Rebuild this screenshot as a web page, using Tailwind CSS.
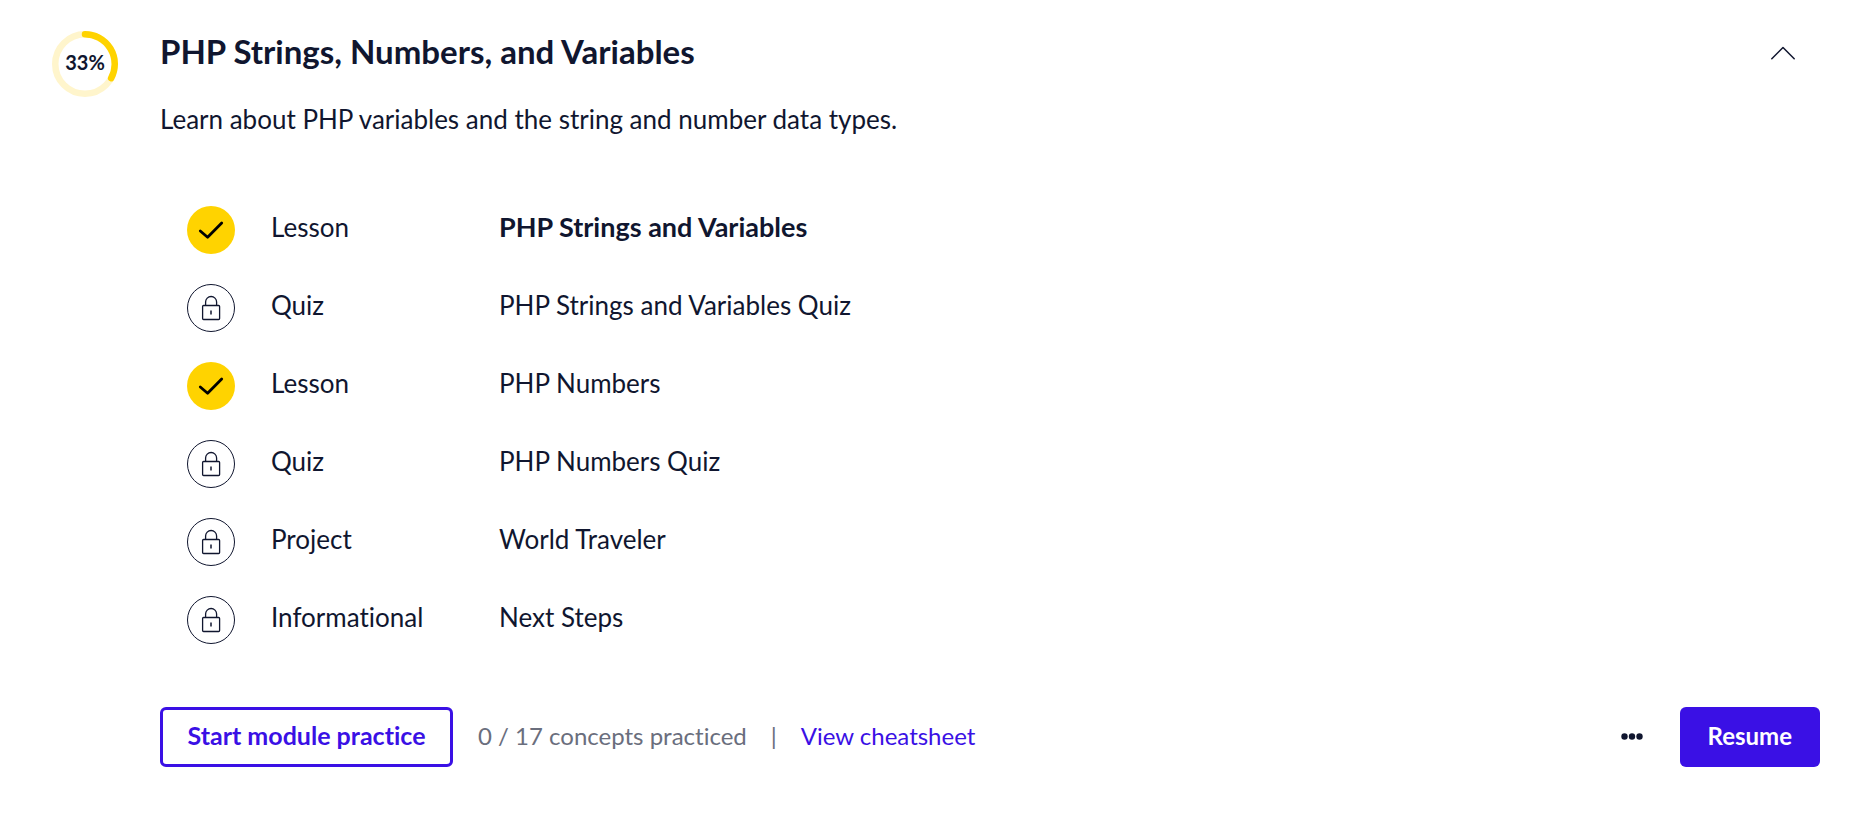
<!DOCTYPE html>
<html lang="en">
<head>
<meta charset="utf-8">
<meta name="viewport" content="width=device-width, initial-scale=1">
<title>PHP Strings, Numbers, and Variables</title>
<script src="https://cdn.jsdelivr.net/npm/@tailwindcss/browser@4"></script>
</head>
<body class="bg-white font-['Lato',sans-serif] text-[26px] leading-9 text-[#10162f] [font-variant-ligatures:none]">
<svg class="hidden">
  <symbol id="check" viewBox="0 0 48 48">
    <circle cx="24" cy="24" r="24" fill="#ffd300"/>
    <path d="M13.3 25 L20.6 31.3 L34.7 17.1" fill="none" stroke="#000" stroke-width="2.8" stroke-linecap="round" stroke-linejoin="round"/>
  </symbol>
  <symbol id="lock" viewBox="0 0 48 48" fill="none" stroke="#10162f">
    <circle cx="24" cy="24" r="23.5"/>
    <rect x="15.6" y="21.5" width="17" height="14" rx="1" stroke-width="1.3"/>
    <path d="M18.6 21.5V18a5.5 5.5 0 0 1 11 0v3.500" stroke-width="1.3"/>
    <path d="M24 26.500v4" stroke-width="1.500"/>
  </symbol>
</svg>
<main class="flex items-start pl-13 pr-11 pt-[31px]">
  <div class="grid size-[66px] shrink-0 place-items-center" role="img" aria-label="33% complete">
    <svg class="col-start-1 row-start-1 size-full" viewBox="0 0 66 66" fill="none" stroke-width="6.500">
      <circle cx="33" cy="33" r="29.750" stroke="#fff5cc"/>
      <path d="M33 3.250A29.750 29.750 0 0 1 59.200 47.100" stroke="#ffd300" stroke-linecap="round"/>
    </svg>
    <span class="col-start-1 row-start-1 pb-1 text-xl font-bold">33%</span>
  </div>
  <section class="ml-[42px] min-w-0 grow">
    <header class="flex items-start justify-between">
      <h1 class="text-[33px] leading-10 font-bold">PHP Strings, Numbers, and Variables</h1>
      <button type="button" aria-label="Collapse module" class="mr-[25px] mt-2.5">
        <svg class="h-6 w-6" viewBox="0 0 24 24" fill="none" stroke="#10162f" stroke-width="1.500" stroke-linecap="round" stroke-linejoin="round"><path d="M0.800 17.800 12 6.500 23.200 17.800"/></svg>
      </button>
    </header>
    <p class="mt-[30px]">Learn about PHP variables and the string and number data types.</p>
    <ul class="mt-[69px] ml-[27px] flex flex-col gap-[30px]">
      <li class="flex"><svg class="size-12" role="img" aria-label="Completed"><use href="#check"/></svg><span class="ml-9 mt-[3px] w-[228px]">Lesson</span><a href="#" class="mt-[3px] text-[27px] font-bold">PHP Strings and Variables</a></li>
      <li class="flex"><svg class="size-12" role="img" aria-label="Locked"><use href="#lock"/></svg><span class="ml-9 mt-[3px] w-[228px]">Quiz</span><a href="#" class="mt-[3px]">PHP Strings and Variables Quiz</a></li>
      <li class="flex"><svg class="size-12" role="img" aria-label="Completed"><use href="#check"/></svg><span class="ml-9 mt-[3px] w-[228px]">Lesson</span><a href="#" class="mt-[3px]">PHP Numbers</a></li>
      <li class="flex"><svg class="size-12" role="img" aria-label="Locked"><use href="#lock"/></svg><span class="ml-9 mt-[3px] w-[228px]">Quiz</span><a href="#" class="mt-[3px]">PHP Numbers Quiz</a></li>
      <li class="flex"><svg class="size-12" role="img" aria-label="Locked"><use href="#lock"/></svg><span class="ml-9 mt-[3px] w-[228px]">Project</span><a href="#" class="mt-[3px]">World Traveler</a></li>
      <li class="flex"><svg class="size-12" role="img" aria-label="Locked"><use href="#lock"/></svg><span class="ml-9 mt-[3px] w-[228px]">Informational</span><a href="#" class="mt-[3px]">Next Steps</a></li>
    </ul>
    <footer class="mt-[63px] flex items-center text-2xl">
      <button type="button" class="h-15 min-w-[293px] rounded-md border-3 border-[#3a10e5] px-5 pb-0.5 text-[25px] font-bold text-[#3a10e5]">Start module practice</button>
      <span class="ml-[25px] pb-0.5 text-[#6a6e7d]">0 / 17 concepts practiced</span>
      <span class="mx-6 pb-0.5 text-[#6a6e7d]">|</span>
      <a href="#" class="pb-0.5 text-[#3a10e5]">View cheatsheet</a>
      <button type="button" aria-label="More options" class="ml-auto mr-9">
        <svg class="h-6 w-6" viewBox="0 0 24 24" fill="#10162f"><circle cx="4.500" cy="11.500" r="3.200"/><circle cx="12" cy="11.500" r="3.200"/><circle cx="19.500" cy="11.500" r="3.200"/></svg>
      </button>
      <button type="button" class="h-15 rounded-md bg-[#3a10e5] px-7 pb-0.5 font-bold text-white">Resume</button>
    </footer>
  </section>
</main>
</body>
</html>
